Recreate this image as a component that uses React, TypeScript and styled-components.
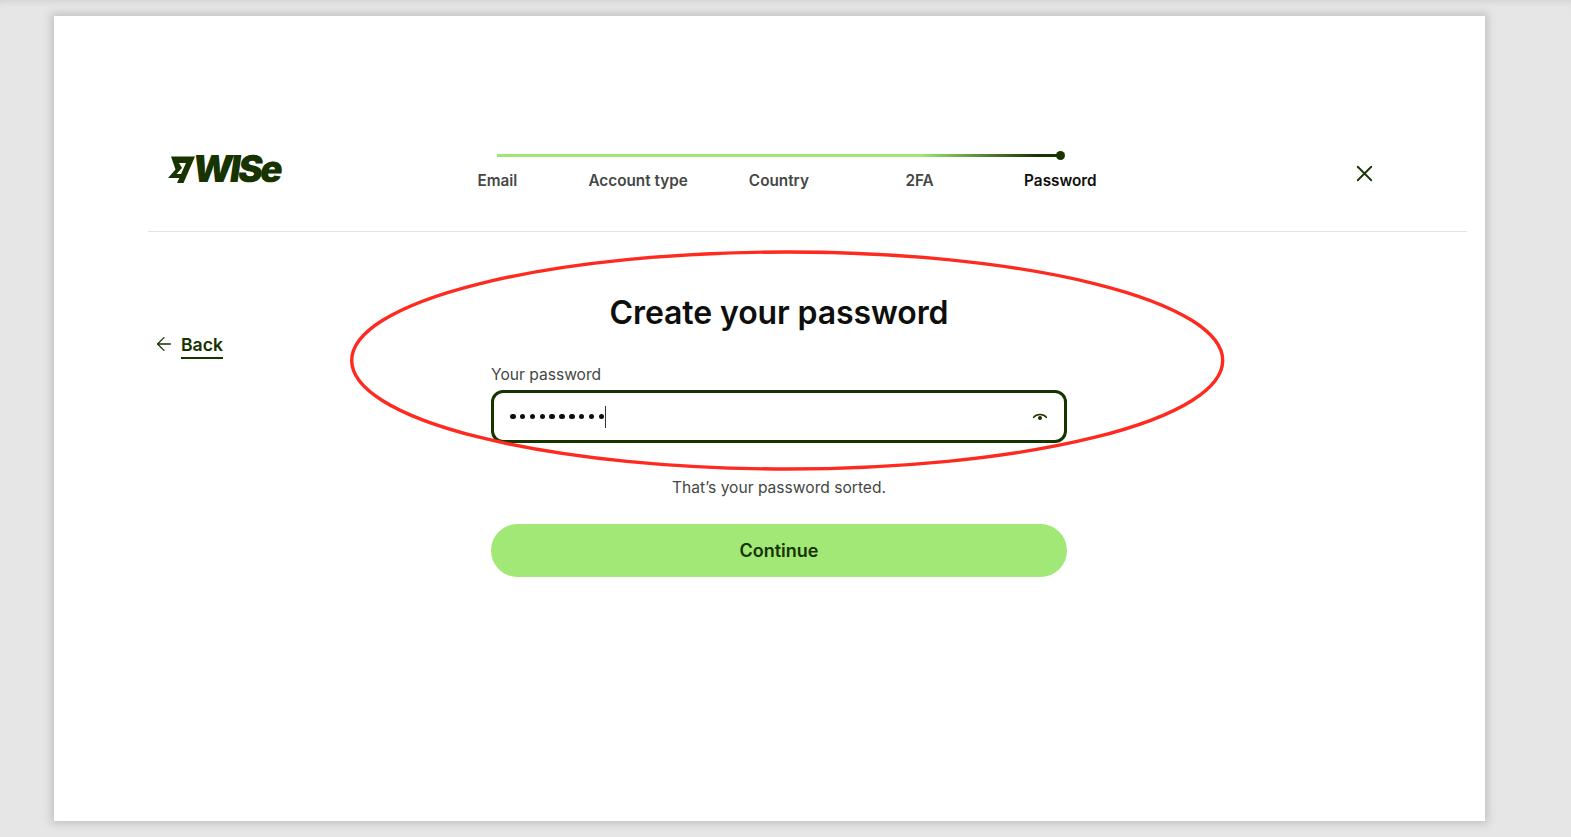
import React from 'react';
import styled, { createGlobalStyle } from 'styled-components';
import { ArrowLeft, X } from 'lucide-react';

const GlobalStyle = createGlobalStyle`
  html, body {
    margin: 0;
    height: 100%;
    overflow: hidden;
    background: #e6e6e6;
    font-family: Inter, "Liberation Sans", sans-serif;
  }
`;

const Page = styled.div`
  box-sizing: border-box;
  width: 1571px;
  height: 837px;
  padding: 16px 86px 16px 54px;
  box-shadow: inset 0 6px 6px -4px #d2d2d2;
`;

const Card = styled.main`
  position: relative;
  height: 805px;
  background: #fff;
  box-shadow: 0 0 8px 3px #c4c4c4;
  padding: 0 18px 0 94px;
`;

const Header = styled.header`
  box-sizing: border-box;
  height: 216px;
  display: grid;
  grid-template-columns: 349px 564px 1fr;
  border-bottom: 1px solid #e2e4e1;
  padding-top: 133px;
`;

const Logo = styled.div`
  display: flex;
  align-items: center;
  height: 40px;
  padding-left: 20px;
  color: #163300;
`;

const LogoWord = styled.span`
  font-size: 37px;
  line-height: 40px;
  font-weight: 900;
  letter-spacing: -2.6px;
  transform: skewX(-8deg);
  margin-left: -2px;
`;

const Stepper = styled.div`
  position: relative;
  height: 60px;
`;

const Track = styled.div`
  height: 2.5px;
  margin-top: 5px;
  background: linear-gradient(90deg, #9fe870 0%, #9fe870 75%, #163300 96%);
`;

const Dot = styled.span`
  position: absolute;
  right: -4px;
  top: 1.5px;
  width: 9px;
  height: 9px;
  border-radius: 50%;
  background: #163300;
`;

const Steps = styled.ol`
  list-style: none;
  margin: 13.5px -70px 0;
  padding: 0;
  display: grid;
  grid-template-columns: repeat(5, 140.75px);
`;

const Step = styled.li<{ $active?: boolean }>`
  text-align: center;
  font-size: 15.3px;
  line-height: 22px;
  font-weight: 600;
  color: ${p => (p.$active ? '#0e0f0c' : '#454745')};
`;

const CloseButton = styled.button`
  justify-self: end;
  margin: 11px 89px 0 0;
  width: 27px;
  height: 27px;
  padding: 0;
  border: 0;
  background: none;
  color: #163300;
`;

const Body = styled.div`
  display: grid;
  grid-template-columns: 343px 576px;
  padding-top: 59px;
`;

const BackLink = styled.a`
  display: flex;
  align-items: flex-start;
  gap: 7px;
  padding: 42px 0 0 5px;
  color: #163300;
  font-size: 17.6px;
  line-height: 23px;
  font-weight: 600;
`;

const BackLabel = styled.span`
  border-bottom: 2px solid #163300;
  height: 24px;
  margin-left: -1px;
`;

const Form = styled.form`
  display: flex;
  flex-direction: column;
`;

const Title = styled.h1`
  margin: 0 0 29px;
  text-align: center;
  font-size: 32px;
  line-height: 44px;
  font-weight: 600;
  letter-spacing: -0.1px;
  color: #0e0f0c;
`;

const FieldLabel = styled.label`
  font-size: 15.6px;
  line-height: 22px;
  color: #454745;
  margin-bottom: 4px;
`;

const Field = styled.div`
  box-sizing: border-box;
  height: 53px;
  border: 3.5px solid #163300;
  border-radius: 12px;
  display: flex;
  align-items: center;
  justify-content: space-between;
  padding: 0 16px;
`;

const Mask = styled.span`
  display: flex;
  align-items: center;
  gap: 4.35px;
`;

const MaskDot = styled.i`
  width: 5.5px;
  height: 5.5px;
  border-radius: 50%;
  background: #0e0f0c;
`;

const Caret = styled.i`
  width: 1px;
  height: 22px;
  margin-left: -3px;
  background: #333;
`;

const Hint = styled.p`
  margin: 34px 0 25px;
  text-align: center;
  font-size: 15.6px;
  line-height: 22px;
  color: #454745;
`;

const Submit = styled.button`
  height: 53px;
  border: 0;
  border-radius: 27px;
  background: #a2e877;
  color: #163300;
  font: 600 18px/24px Inter, sans-serif;
`;

const Annotation = styled.svg`
  position: absolute;
  left: 296px;
  top: 234px;
  pointer-events: none;
`;

const App = () => (
  <>
    <GlobalStyle />
    <Page>
      <Card>
        <Header>
          <Logo>
            <svg width="27" height="28" viewBox="0 0 27 28" fill="#163300">
              <path d="M3 1.5 H27 L15.5 28 H9 L18 8 H11 L14 13 L8.5 19 H14.5 L12.5 23 H0 L7.5 14.5 Z" />
            </svg>
            <LogoWord>WISe</LogoWord>
          </Logo>
          <Stepper>
            <Track />
            <Dot />
            <Steps>
              <Step>Email</Step>
              <Step>Account type</Step>
              <Step>Country</Step>
              <Step>2FA</Step>
              <Step $active>Password</Step>
            </Steps>
          </Stepper>
          <CloseButton aria-label="Close">
            <X size={27} strokeWidth={1.6} />
          </CloseButton>
        </Header>
        <Body>
          <BackLink>
            <ArrowLeft size={22} strokeWidth={1.4} />
            <BackLabel>Back</BackLabel>
          </BackLink>
          <Form>
            <Title>Create your password</Title>
            <FieldLabel>Your password</FieldLabel>
            <Field>
              <Mask>
                {Array.from({ length: 10 }).map((_, i) => (
                  <MaskDot key={i} />
                ))}
                <Caret />
              </Mask>
              <svg width="16" height="16" viewBox="0 0 16 16" fill="none" stroke="#163300" strokeWidth="1.3" strokeLinecap="round">
                <path d="M1.5 8.5 C4.5 4.5 11.5 4.5 14.5 8.5" />
                <circle cx="8" cy="9" r="2" fill="#163300" stroke="none" />
              </svg>
            </Field>
            <Hint>That’s your password sorted.</Hint>
            <Submit type="button">Continue</Submit>
          </Form>
        </Body>
        <Annotation width="880" height="224" viewBox="0 0 880 224" fill="none">
          <ellipse cx="437.2" cy="110.5" rx="435.5" ry="108.5" stroke="#ff2a1f" strokeWidth="3.4" />
        </Annotation>
      </Card>
    </Page>
  </>
);

export default App;
